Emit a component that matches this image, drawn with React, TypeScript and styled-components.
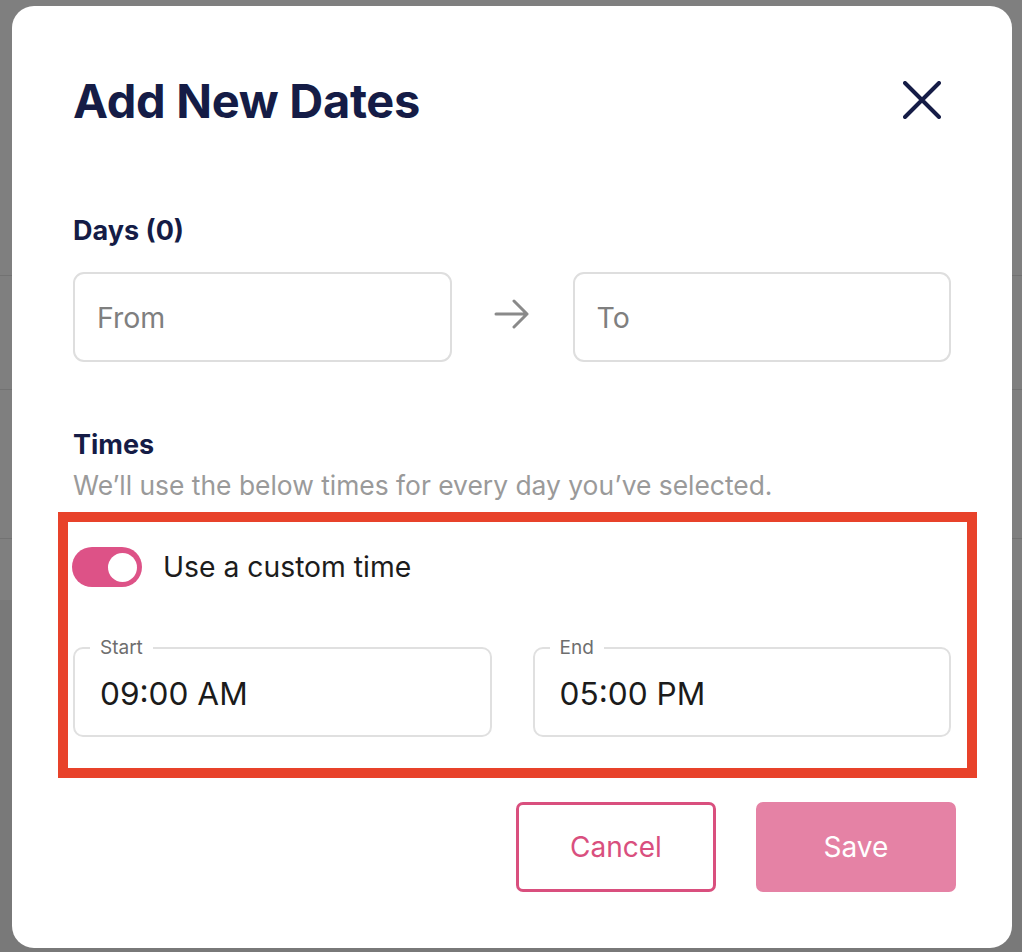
import React, { useState } from 'react';
import styled, { createGlobalStyle } from 'styled-components';

const GlobalStyle = createGlobalStyle`
  html, body {
    margin: 0;
    padding: 0;
  }
  body {
    font-family: Inter, "Noto Sans", sans-serif;
    /* dimmed page behind the modal */
    background:
      linear-gradient(#727272, #727272) 0 275px / 100% 1px no-repeat,
      linear-gradient(#727272, #727272) 0 389px / 100% 1px no-repeat,
      linear-gradient(#727272, #727272) 0 538px / 100% 1px no-repeat,
      linear-gradient(#7f7f7f 0, #7f7f7f 600px, #797979 600px);
    min-height: 952px;
  }
`;

const Backdrop = styled.div`
  width: 1022px;
  height: 952px;
  padding: 6px 10px 4px 12px;
  box-sizing: border-box;
`;

const Modal = styled.div`
  width: 1000px;
  height: 942px;
  box-sizing: border-box;
  background: #fff;
  border-radius: 22px;
  padding: 67px 61px 0 61px;
  display: flex;
  flex-direction: column;
`;

const Header = styled.div`
  display: flex;
  justify-content: space-between;
  align-items: center;
  padding-right: 10px;
`;

const Title = styled.h1`
  margin: 0;
  font-size: 47px;
  line-height: 56px;
  font-weight: 700;
  color: #151c46;
  letter-spacing: -0.3px;
`;

const CloseButton = styled.button`
  border: 0;
  background: none;
  padding: 0;
  width: 38px;
  height: 38px;
  margin-top: -3px;
  display: flex;
  align-items: center;
  justify-content: center;
  cursor: pointer;
`;

const SectionLabel = styled.div<{ $top: number }>`
  margin-top: ${(p) => p.$top}px;
  font-size: 27px;
  line-height: 34px;
  font-weight: 700;
  color: #151c46;
`;

const Hint = styled.div`
  margin-top: 8px;
  font-size: 26.4px;
  line-height: 30px;
  color: #9a9a9a;
`;

const RangeRow = styled.div`
  margin-top: 24px;
  display: flex;
  align-items: center;
`;

const DateInput = styled.div`
  flex: 1;
  height: 90px;
  box-sizing: border-box;
  border: 2px solid #dedede;
  border-radius: 11px;
  padding-left: 22px;
  display: flex;
  align-items: center;
  font-size: 28.5px;
  color: #7f7f7f;
`;

const ArrowBox = styled.div`
  width: 121px;
  display: flex;
  justify-content: center;
  align-items: center;
  margin-top: -6px;
`;

const Highlight = styled.div`
  margin: 12px -26px 0 -15px;
  height: 266px;
  box-sizing: border-box;
  border: 10px solid #e8422a;
  padding: 25px 16px 0 5px;
`;

const ToggleRow = styled.div`
  display: flex;
  align-items: center;
  gap: 21px;
`;

const Switch = styled.button<{ $on: boolean }>`
  position: relative;
  width: 70px;
  height: 40px;
  margin-left: -1px;
  border: 0;
  padding: 0;
  border-radius: 20px;
  background: ${(p) => (p.$on ? '#dd5287' : '#cfcfcf')};
  cursor: pointer;

  &::after {
    content: '';
    position: absolute;
    top: 5.5px;
    left: ${(p) => (p.$on ? '36px' : '5px')};
    width: 29px;
    height: 29px;
    border-radius: 50%;
    background: #fff;
  }
`;

const ToggleText = styled.span`
  font-size: 28.3px;
  line-height: 34px;
  color: #1c1c1c;
`;

const TimeRow = styled.div`
  margin-top: 51px;
  display: flex;
  gap: 41px;
`;

const TimeField = styled.fieldset`
  flex: 1;
  margin: 0;
  height: 99px;
  box-sizing: border-box;
  border: 2px solid #e0e0e0;
  border-radius: 10px;
  padding: 0 0 0 15px;
  min-width: 0;
`;

const TimeLabel = styled.legend`
  padding: 0 10px;
  font-size: 19px;
  line-height: 20px;
  color: #6e6e6e;
`;

const TimeValue = styled.div`
  padding: 18px 0 0 10px;
  font-size: 31.6px;
  line-height: 36px;
  color: #1b1b1b;
`;

const Footer = styled.div`
  margin-top: 24px;
  margin-right: -5px;
  display: flex;
  justify-content: flex-end;
  gap: 40px;
`;

const Button = styled.button<{ $variant: 'outline' | 'solid' }>`
  width: 200px;
  height: 90px;
  box-sizing: border-box;
  border-radius: 7px;
  font-family: inherit;
  font-size: 28px;
  cursor: pointer;
  border: 3px solid ${(p) => (p.$variant === 'outline' ? '#d94f7e' : '#e582a5')};
  background: ${(p) => (p.$variant === 'outline' ? '#fff' : '#e582a5')};
  color: ${(p) => (p.$variant === 'outline' ? '#d94f7e' : '#fff')};
`;

export default function App() {
  const [custom, setCustom] = useState(true);

  return (
    <>
      <GlobalStyle />
      <Backdrop>
        <Modal>
          <Header>
            <Title>Add New Dates</Title>
            <CloseButton aria-label="Close">
              <svg width="38" height="38" viewBox="0 0 38 38" fill="none">
                <path d="M2 2L36 36M36 2L2 36" stroke="#151c46" strokeWidth="4" strokeLinecap="round" />
              </svg>
            </CloseButton>
          </Header>

          <SectionLabel $top={85}>Days (0)</SectionLabel>
          <RangeRow>
            <DateInput>From</DateInput>
            <ArrowBox>
              <svg width="36" height="30" viewBox="0 0 36 30" fill="none">
                <path d="M2 15H33M20 2L33 15L20 28" stroke="#8a8a8a" strokeWidth="3" strokeLinecap="round" strokeLinejoin="round" />
              </svg>
            </ArrowBox>
            <DateInput>To</DateInput>
          </RangeRow>

          <SectionLabel $top={66}>Times</SectionLabel>
          <Hint>We’ll use the below times for every day you’ve selected.</Hint>

          <Highlight>
            <ToggleRow>
              <Switch $on={custom} onClick={() => setCustom(!custom)} aria-label="Use a custom time" />
              <ToggleText>Use a custom time</ToggleText>
            </ToggleRow>
            <TimeRow>
              <TimeField>
                <TimeLabel>Start</TimeLabel>
                <TimeValue>09:00 AM</TimeValue>
              </TimeField>
              <TimeField>
                <TimeLabel>End</TimeLabel>
                <TimeValue>05:00 PM</TimeValue>
              </TimeField>
            </TimeRow>
          </Highlight>

          <Footer>
            <Button $variant="outline">Cancel</Button>
            <Button $variant="solid">Save</Button>
          </Footer>
        </Modal>
      </Backdrop>
    </>
  );
}
